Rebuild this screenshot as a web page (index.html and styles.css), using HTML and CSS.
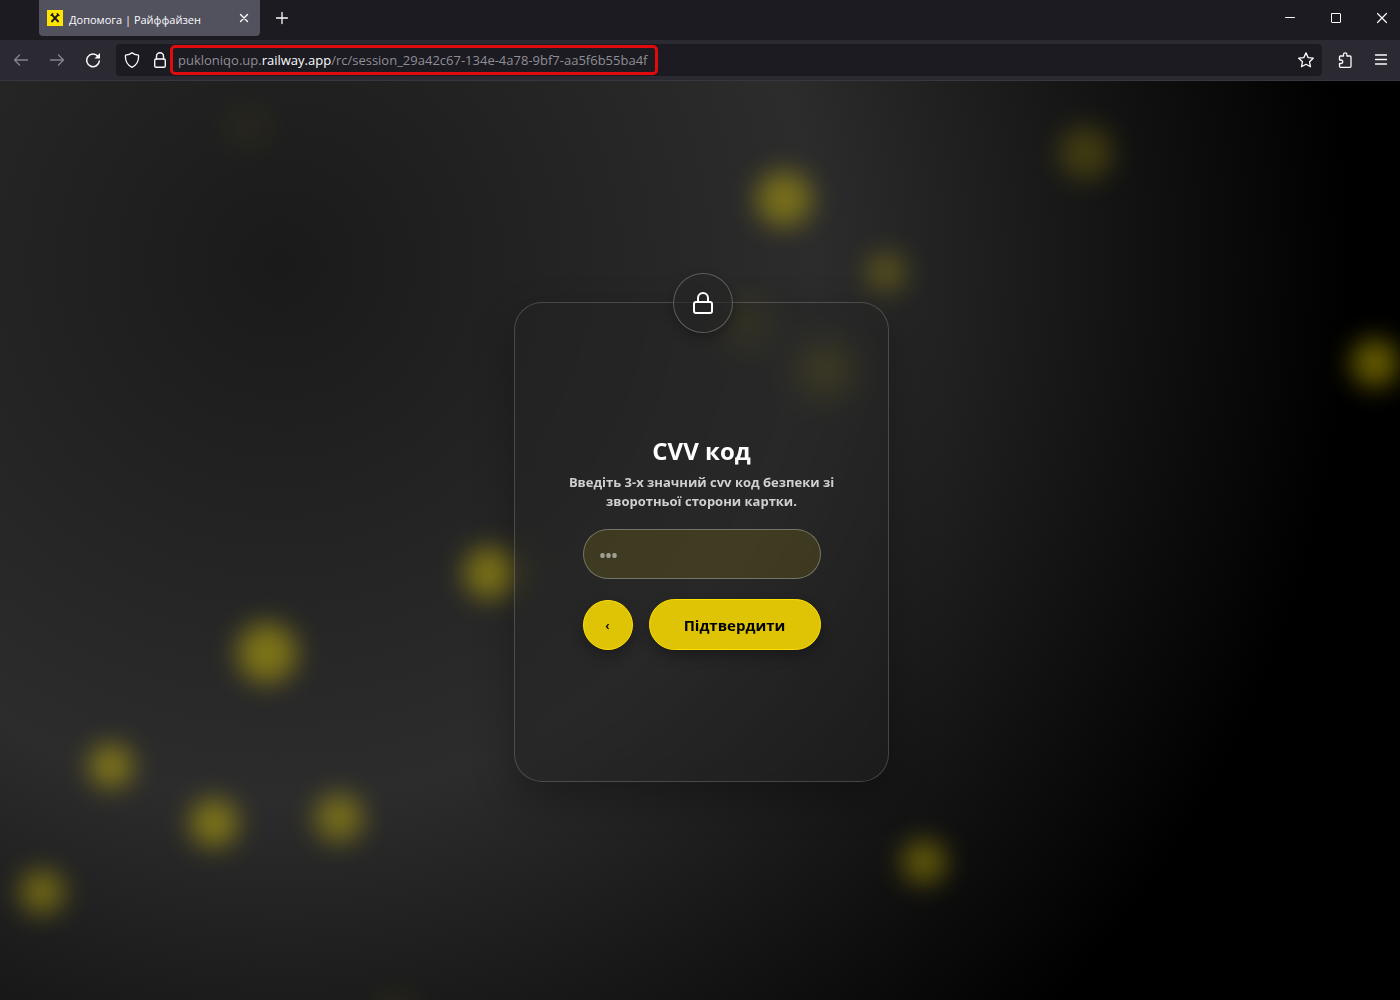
FILE: index.html
```html
<!DOCTYPE html>
<html lang="uk">
<head>
<meta charset="utf-8">
<meta name="viewport" content="width=device-width, initial-scale=1">
<title>Допомога | Райффайзен</title>
<link rel="stylesheet" href="styles.css">
</head>
<body>
<div class="browser">
  <header class="chrome">
    <div class="tabstrip">
      <div class="tab">
        <svg class="favicon" viewBox="0 0 16 16" aria-hidden="true"><path fill="#fee600" d="M0 0h16v16H0z"/><path d="M4.600 4.400l7 7.600M11.400 4.400l-7 7.600" stroke="#1b1b1f" stroke-width="1.900" fill="none"/><path d="M3.600 5.800l2.600-2.600M12.400 5.800L9.800 3.200" stroke="#1b1b1f" stroke-width="1.300"/></svg>
        <span class="tab-title">Допомога | Райффайзен</span>
        <button class="icon-button tab-close" type="button" aria-label="Close tab"><svg viewBox="0 0 16 16"><path stroke-width="1.400" d="M4.500 4.500l7 7M11.500 4.500l-7 7"/></svg></button>
      </div>
      <button class="icon-button new-tab" type="button" aria-label="New tab"><svg viewBox="0 0 16 16"><path stroke-width="1.300" d="M8 2.500v11M2.500 8h11"/></svg></button>
      <div class="window-buttons">
        <button class="icon-button" type="button" aria-label="Minimize"><svg viewBox="0 0 16 16"><path d="M3.500 7.500h9"/></svg></button>
        <button class="icon-button" type="button" aria-label="Maximize"><svg viewBox="0 0 16 16"><rect x="3.500" y="3.500" width="9" height="9" rx="0.500"/></svg></button>
        <button class="icon-button" type="button" aria-label="Close"><svg viewBox="0 0 16 16"><path stroke-width="1.200" d="M3.500 3.500l9 9M12.500 3.500l-9 9"/></svg></button>
      </div>
    </div>
    <div class="toolbar">
      <button class="icon-button dim" type="button" aria-label="Back"><svg viewBox="0 0 16 16"><path stroke-width="1.300" d="M14.500 8h-13M6.500 3l-5 5 5 5"/></svg></button>
      <button class="icon-button dim" type="button" aria-label="Forward"><svg viewBox="0 0 16 16"><path stroke-width="1.300" d="M1.500 8h13M9.500 3l5 5-5 5"/></svg></button>
      <button class="icon-button" type="button" aria-label="Reload"><svg viewBox="0 0 16 16"><path stroke-width="1.500" d="M13 4.500A6.300 6.300 0 1 0 14.300 9"/><path class="solid" d="M15 1v5.500H9.500z"/></svg></button>
      <div class="address">
        <svg class="address-icon" viewBox="0 0 16 16" aria-hidden="true"><path stroke-width="1.300" d="M8 .8C6.500 2.200 4 3 1.500 3.200 1 9 3.500 13.300 8 15.300c4.500-2 7-6.300 6.500-12.100C12 3 9.500 2.200 8 .8z"/></svg>
        <svg class="address-icon" viewBox="0 0 16 16" aria-hidden="true"><path stroke-width="1.400" d="M4.500 7V4.300a3.500 3.500 0 0 1 7 0V7"/><rect stroke-width="1.400" x="2.700" y="7" width="10.600" height="8.300" rx="1.500"/></svg>
        <div class="url">pukloniqo.up.<span class="domain">railway.app</span>/rc/session_29a42c67-134e-4a78-9bf7-aa5f6b55ba4f</div>
        <button class="icon-button star" type="button" aria-label="Bookmark"><svg viewBox="0 0 16 16"><path stroke-width="1.300" d="M8 .9l2.200 4.700 5.100.6-3.800 3.500 1 5.100L8 12.300l-4.500 2.500 1-5.100L.7 6.200l5.100-.6z"/></svg></button>
      </div>
      <button class="icon-button" type="button" aria-label="Extensions"><svg viewBox="0 0 16 16"><path stroke-width="1.300" d="M2.500 8V5q0-1 1-1h3V2.500a1.700 1.700 0 0 1 3.400 0V4H13q1 0 1 1v9.300q0 1-1 1H3.500q-1 0-1-1V11.500H4a1.700 1.700 0 0 0 0-3.500z"/></svg></button>
      <button class="icon-button" type="button" aria-label="Menu"><svg viewBox="0 0 16 16"><path stroke-width="1.300" d="M2.500 3h11M2.500 7.500h11M2.500 12h11"/></svg></button>
    </div>
  </header>
  <main class="page">
    <div class="glows" aria-hidden="true">
      <span class="glow glow-1"></span><span class="glow glow-2"></span><span class="glow glow-3"></span><span class="glow glow-4"></span><span class="glow glow-5"></span><span class="glow glow-6"></span><span class="glow glow-7"></span><span class="glow glow-8"></span><span class="glow glow-9"></span><span class="glow glow-10"></span><span class="glow glow-11"></span><span class="glow glow-12"></span><span class="glow glow-13"></span><span class="glow glow-14"></span><span class="glow glow-15"></span>
    </div>
    <section class="card">
      <div class="badge"><svg viewBox="0 0 24 24" aria-hidden="true"><path d="M7 11V7a5 5 0 0 1 10 0v4"/><rect x="3" y="11" width="18" height="11" rx="2"/></svg></div>
      <h1 class="title">CVV код</h1>
      <label class="hint" for="code">Введіть 3-х значний cvv код безпеки зі зворотньої сторони картки.</label>
      <input class="code" id="code" type="text" placeholder="•••" autocomplete="off" readonly>
      <div class="actions">
        <button class="pill back" type="button">‹</button>
        <button class="pill confirm" type="button">Підтвердити</button>
      </div>
    </section>
  </main>
</div>
</body>
</html>
```
FILE: styles.css
```css
* { box-sizing: border-box; }

body {
  margin: 0;
  background: #000;
  color: #fbfbfe;
  font-family: "Open Sans", "Noto Sans", sans-serif;
}

button, input { font-family: inherit; }

.browser {
  display: flex;
  flex-direction: column;
  min-height: 100vh;
}

/* Browser frame */
.tabstrip {
  display: flex;
  align-items: center;
  height: 40px;
  padding: 0 10px 4px 39px;
  background: #1c1b22;
}

.tab {
  display: flex;
  align-items: center;
  gap: 6px;
  width: 221px;
  height: 36px;
  padding: 0 8px;
  border-radius: 0 0 4px 4px;
  background: #52525e;
  font-size: 11px;
}

.favicon { width: 16px; height: 16px; }
.tab-title { flex: 1; padding-top: 2px; white-space: nowrap; }

.icon-button {
  display: flex;
  padding: 0;
  border: 0;
  background: none;
  color: #fbfbfe;
}

.icon-button svg, .address-icon {
  width: 16px;
  height: 16px;
  fill: none;
  stroke: currentColor;
  stroke-linecap: round;
  stroke-linejoin: round;
}

.icon-button .solid { fill: currentColor; stroke: none; }
.dim { color: #86858d; }
.new-tab { margin-left: 14px; }

.window-buttons {
  display: flex;
  gap: 30px;
  margin-left: auto;
}

.toolbar {
  display: flex;
  align-items: center;
  gap: 20px;
  height: 41px;
  padding: 0 11px 0 13px;
  border-bottom: 1px solid #38373f;
  background: #2b2a33;
}

.toolbar .address { margin: 0 -5px; }

.address {
  display: flex;
  flex: 1;
  align-items: center;
  gap: 12px;
  height: 32px;
  padding: 0 8px;
  border-radius: 4px;
  background: #1c1b22;
}

.url {
  margin-left: -10px;
  padding: 1px 8px 0 5px;
  border: 3px solid #e00b0f;
  border-radius: 5px;
  color: #8f8e95;
  font-size: 13px;
  line-height: 23px;
  white-space: nowrap;
}

.domain { color: #fbfbfe; }
.star { margin-left: auto; }

/* Page */
.page {
  position: relative;
  display: flex;
  flex: 1;
  align-items: center;
  justify-content: center;
  padding: 63px 15px 60px 18px;
  overflow: hidden;
  background: radial-gradient(circle at 20% 20%, #1a1a1a, #2c2c2c 40%, #000 80%);
}

.glows { position: absolute; inset: 0; }

.glow {
  position: absolute;
  width: 48px;
  height: 48px;
  border-radius: 50%;
  background: #ffe600;
  filter: blur(13px);
  opacity: 0.4;
  transform: translate(-50%, -50%);
}

.glow-1 { left: 56%; top: 12.800%; width: 56px; height: 56px; opacity: 0.36; }
.glow-2 { left: 77.600%; top: 7.800%; width: 54px; height: 54px; opacity: 0.18; }
.glow-3 { left: 63.300%; top: 20.800%; width: 40px; height: 40px; opacity: 0.22; }
.glow-4 { left: 98.200%; top: 30.700%; opacity: 0.4; }
.glow-5 { left: 53.500%; top: 26.500%; opacity: 0.1; }
.glow-6 { left: 59%; top: 31.500%; width: 56px; height: 56px; opacity: 0.16; }
.glow-7 { left: 35%; top: 53.500%; width: 52px; height: 52px; }
.glow-8 { left: 19.100%; top: 62.200%; width: 60px; height: 60px; }
.glow-9 { left: 7.900%; top: 74.500%; width: 44px; height: 44px; }
.glow-10 { left: 15.300%; top: 80.700%; }
.glow-11 { left: 24.200%; top: 80.200%; opacity: 0.36; }
.glow-12 { left: 3%; top: 88.200%; width: 44px; height: 44px; opacity: 0.36; }
.glow-13 { left: 66%; top: 85%; width: 44px; height: 44px; opacity: 0.34; }
.glow-14 { left: 17.700%; top: 5%; opacity: 0.03; }
.glow-15 { left: 28.300%; top: 102%; opacity: 0.06; }

.card {
  position: relative;
  display: flex;
  flex-direction: column;
  align-items: center;
  justify-content: center;
  width: 375px;
  min-height: 480px;
  padding: 40px 50px;
  border: 1px solid rgba(255, 255, 255, 0.18);
  border-radius: 28px;
  background: rgba(36, 36, 36, 0.4);
  box-shadow: 0 16px 40px rgba(0, 0, 0, 0.3);
  backdrop-filter: blur(10px);
}

.badge {
  position: absolute;
  top: -30px;
  left: calc(50% - 29px);
  display: grid;
  place-items: center;
  width: 60px;
  height: 60px;
  border: 1px solid rgba(255, 255, 255, 0.25);
  border-radius: 50%;
  background: rgba(36, 36, 36, 0.6);
  box-shadow: 0 4px 12px rgba(0, 0, 0, 0.3);
}

.badge svg {
  width: 24px;
  height: 24px;
  fill: none;
  stroke: #fff;
  stroke-width: 2;
  stroke-linejoin: round;
}

.title {
  margin: 0 0 6px;
  color: #fff;
  font-size: 24px;
  line-height: 32px;
}

.hint {
  margin-bottom: 18px;
  color: #d0d0d0;
  font-size: 13px;
  font-weight: 700;
  line-height: 19px;
  text-align: center;
}

.code {
  width: 238px;
  height: 50px;
  padding: 3px 16px 0;
  border: 1px solid rgba(255, 255, 255, 0.3);
  border-radius: 25px;
  outline: 0;
  background: rgba(255, 230, 0, 0.11);
  color: #fff;
  font-size: 16px;
  font-weight: 700;
}

.code::placeholder { color: #a09f92; opacity: 1; }

.actions {
  display: flex;
  align-items: flex-end;
  gap: 16px;
  width: 238px;
  margin-top: 20px;
}

.pill {
  height: 51px;
  padding: 1px 0 0;
  border: 1px solid #ffe000;
  border-radius: 26px;
  background: #dfc406;
  box-shadow: 0 6px 14px rgba(0, 0, 0, 0.3);
  color: #000;
  font-size: 15px;
  font-weight: 700;
}

.back { width: 50px; height: 50px; font-size: 13px; font-weight: 600; }
.confirm { flex: 1; }
```
